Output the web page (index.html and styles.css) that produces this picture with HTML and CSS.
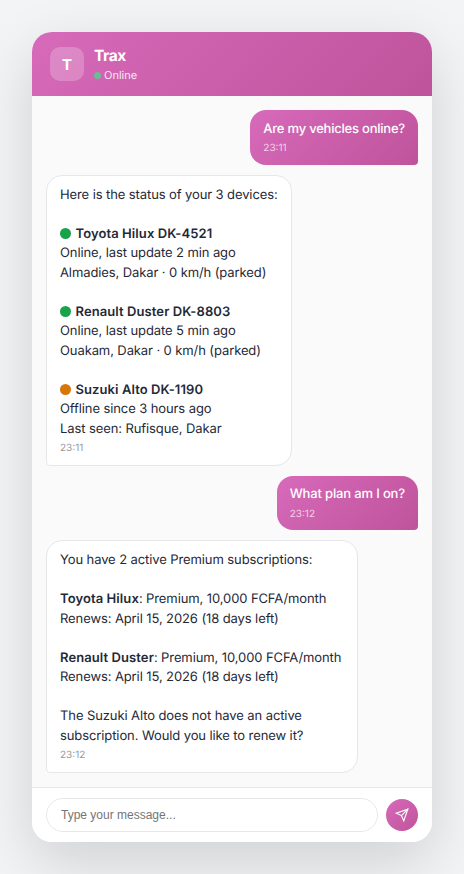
FILE: index.html
```html
<!DOCTYPE html>
<html lang="en">
<head>
<meta charset="utf-8">
<title>Trax</title>
<link rel="stylesheet" href="styles.css">
</head>
<body>
<main class="chat">
  <header class="head">
    <div class="avatar">T</div>
    <div class="who">
      <div class="name">Trax</div>
      <div class="status"><span class="status-dot"></span>Online</div>
    </div>
  </header>
  <section class="messages">
    <div class="msg user tight">Are my vehicles online?<div class="time">23:11</div></div>
    <div class="msg bot">Here is the status of your 3 devices:<br><br><span class="dot green"></span><strong>Toyota Hilux DK-4521</strong><br>Online, last update 2 min ago<br>Almadies, Dakar · 0 km/h (parked)<br><br><span class="dot green"></span><strong>Renault Duster DK-8803</strong><br>Online, last update 5 min ago<br>Ouakam, Dakar · 0 km/h (parked)<br><br><span class="dot amber"></span><strong>Suzuki Alto DK-1190</strong><br>Offline since 3 hours ago<br>Last seen: Rufisque, Dakar<div class="time">23:11</div></div>
    <div class="msg user">What plan am I on?<div class="time">23:12</div></div>
    <div class="msg bot">You have 2 active Premium subscriptions:<br><br><strong>Toyota Hilux</strong>: Premium, 10,000 FCFA/month<br>Renews: April 15, 2026 (18 days left)<br><br><strong>Renault Duster</strong>: Premium, 10,000 FCFA/month<br>Renews: April 15, 2026 (18 days left)<br><br>The Suzuki Alto does not have an active subscription. Would you like to renew it?<div class="time">23:12</div></div>
  </section>
  <footer class="composer">
    <input class="field" type="text" placeholder="Type your message...">
    <button class="send" aria-label="Send">
      <svg width="14" height="14" viewBox="0 0 24 24" fill="none" stroke="currentColor" stroke-width="2" stroke-linecap="round" stroke-linejoin="miter"><path d="M22 2 11 13"/><path d="M22 2 15 22 11 13 2 9Z"/></svg>
    </button>
  </footer>
</main>
</body>
</html>
```
FILE: styles.css
```css
* { box-sizing: border-box; }
body {
  margin: 0;
  padding: 32px;
  background: #f3f4f6;
  font-family: Inter, "Liberation Sans", sans-serif;
  text-rendering: geometricPrecision;
}
.chat {
  display: flex;
  flex-direction: column;
  width: 400px;
  height: 810px;
  border-radius: 20px;
  overflow: hidden;
  background: #fff;
  box-shadow: 0 20px 60px rgba(0, 0, 0, 0.15);
}
.head {
  display: flex;
  align-items: center;
  gap: 10px;
  height: 64px;
  padding: 0 18px;
  color: #fff;
  background: linear-gradient(135deg, #d76aba, #bf539b);
}
.avatar {
  display: flex;
  align-items: center;
  justify-content: center;
  width: 34px;
  height: 34px;
  border-radius: 10px;
  background: rgba(255, 255, 255, 0.22);
  font-size: 15px;
  font-weight: 700;
}
.who { padding-top: 2px; }
.name { font-size: 15.5px; font-weight: 700; line-height: 20px; letter-spacing: -0.4px; }
.status {
  display: flex;
  align-items: center;
  gap: 3px;
  font-size: 11px;
  line-height: 18px;
  opacity: 0.85;
}
.status-dot { width: 7px; height: 7px; border-radius: 50%; background: #5fc88f; }
.messages {
  flex: 1;
  display: flex;
  flex-direction: column;
  gap: 10px;
  padding: 14px;
  background: #fafafa;
}
.msg {
  max-width: 84%;
  padding: 9.9px 13px 8.1px;
  border-radius: 16px;
  font-size: 13px;
  line-height: 1.5;
}
.user {
  align-self: flex-end;
  color: #fff;
  font-weight: 500;
  letter-spacing: -0.15px;
  background: linear-gradient(135deg, #d76aba, #bf539b);
  border-bottom-right-radius: 4px;
}
.tight { letter-spacing: -0.22px; }
.bot {
  align-self: flex-start;
  padding-top: 10.1px;
  padding-bottom: 7.9px;
  color: #1f2937;
  letter-spacing: -0.1px;
  background: #fff;
  border: 1px solid #e5e7eb;
  border-bottom-left-radius: 4px;
}
.bot strong { font-weight: 600; letter-spacing: 0.09px; }
.time {
  margin-top: 2px;
  font-size: 10px;
  font-weight: 400;
  line-height: 15.3px;
  letter-spacing: 0;
  opacity: 0.7;
}
.bot .time { color: #999; opacity: 1; }
.dot {
  display: inline-block;
  width: 11px;
  height: 11px;
  margin-right: 4.5px;
  border-radius: 50%;
  vertical-align: -1px;
}
.green { background: #16a34a; }
.amber { background: #d97706; }
.composer {
  display: flex;
  align-items: center;
  gap: 8px;
  height: 55px;
  padding: 0 14px;
  border-top: 1px solid #e5e7eb;
  background: #fff;
}
.field {
  flex: 1;
  height: 34px;
  padding: 0 14px;
  border: 1px solid #e5e7eb;
  border-radius: 20px;
  background: #fff;
  font: 12px "Liberation Sans", Arial, sans-serif;
}
.field::placeholder { color: #757575; }
.send {
  display: flex;
  align-items: center;
  justify-content: center;
  width: 32px;
  height: 32px;
  padding: 0;
  border: 0;
  border-radius: 50%;
  color: #fff;
  background: linear-gradient(135deg, #d76aba, #bf539b);
}
```
